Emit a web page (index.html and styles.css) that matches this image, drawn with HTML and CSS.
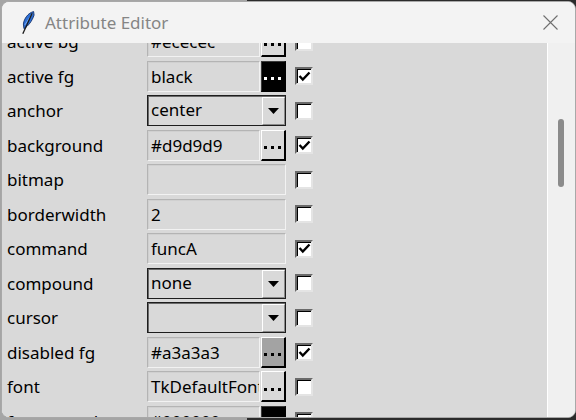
FILE: index.html
```html
<!DOCTYPE html>
<html>
<head>
<meta charset="utf-8">
<link rel="stylesheet" href="styles.css">
</head>
<body>
<div class="window">
  <div class="titlebar">
    <svg class="feather" width="15" height="26" viewBox="0 0 16 26">
      <path d="M14.5 0.8 C8.5 2.5 4.5 8 3.6 14 L4.2 19 C8.5 16.5 13 11 15 4.5 Z" fill="#2d6fd6" stroke="#16346e" stroke-width="1"/>
      <path d="M13.5 3 C10.5 7 7.5 11 5.2 15" stroke="#8db8f2" stroke-width="0.9" fill="none"/>
      <path d="M13 2.5 L3 24.5" stroke="#1a1a1a" stroke-width="1.4"/>
    </svg>
    <span class="title">Attribute Editor</span>
    <svg class="close" width="15" height="15" viewBox="0 0 15 15">
      <path d="M0.5 0.5 L14.5 14.5 M14.5 0.5 L0.5 14.5" stroke="#6f6f6f" stroke-width="1.1"/>
    </svg>
  </div>
  <div class="content">
    <div class="viewport">
      <div class="list">
        <div class="row">
          <span class="label">active bg</span>
          <div class="field"><span class="entry">#ececec</span><span class="btn btn-light"><svg width="18" height="4" viewBox="0 0 18 4"><rect x="0" y="0" width="3" height="3"/><rect x="7" y="0" width="3" height="3"/><rect x="14" y="0" width="3" height="3"/></svg></span></div>
          <span class="check"></span>
        </div>
        <div class="row">
          <span class="label">active fg</span>
          <div class="field"><span class="entry">black</span><span class="btn btn-black"><svg width="18" height="4" viewBox="0 0 18 4"><rect x="0" y="0" width="3" height="3"/><rect x="7" y="0" width="3" height="3"/><rect x="14" y="0" width="3" height="3"/></svg></span></div>
          <span class="check checked"><svg width="13" height="13" viewBox="0 0 13 13"><path d="M1.5 6 L4.8 9.5 L11.5 2.5" fill="none" stroke="#000" stroke-width="2.4"/></svg></span>
        </div>
        <div class="row">
          <span class="label">anchor</span>
          <div class="field combo"><span class="combo-text">center</span><span class="arrow"><svg width="11" height="6" viewBox="0 0 11 6"><path d="M0 0 H11 L5.5 6 Z"/></svg></span></div>
          <span class="check"></span>
        </div>
        <div class="row">
          <span class="label">background</span>
          <div class="field"><span class="entry">#d9d9d9</span><span class="btn btn-light"><svg width="18" height="4" viewBox="0 0 18 4"><rect x="0" y="0" width="3" height="3"/><rect x="7" y="0" width="3" height="3"/><rect x="14" y="0" width="3" height="3"/></svg></span></div>
          <span class="check checked"><svg width="13" height="13" viewBox="0 0 13 13"><path d="M1.5 6 L4.8 9.5 L11.5 2.5" fill="none" stroke="#000" stroke-width="2.4"/></svg></span>
        </div>
        <div class="row">
          <span class="label">bitmap</span>
          <div class="field"><span class="entry"></span></div>
          <span class="check"></span>
        </div>
        <div class="row">
          <span class="label">borderwidth</span>
          <div class="field"><span class="entry">2</span></div>
          <span class="check"></span>
        </div>
        <div class="row">
          <span class="label">command</span>
          <div class="field"><span class="entry">funcA</span></div>
          <span class="check checked"><svg width="13" height="13" viewBox="0 0 13 13"><path d="M1.5 6 L4.8 9.5 L11.5 2.5" fill="none" stroke="#000" stroke-width="2.4"/></svg></span>
        </div>
        <div class="row">
          <span class="label">compound</span>
          <div class="field combo"><span class="combo-text">none</span><span class="arrow"><svg width="11" height="6" viewBox="0 0 11 6"><path d="M0 0 H11 L5.5 6 Z"/></svg></span></div>
          <span class="check"></span>
        </div>
        <div class="row">
          <span class="label">cursor</span>
          <div class="field combo"><span class="combo-text"></span><span class="arrow"><svg width="11" height="6" viewBox="0 0 11 6"><path d="M0 0 H11 L5.5 6 Z"/></svg></span></div>
          <span class="check"></span>
        </div>
        <div class="row">
          <span class="label">disabled fg</span>
          <div class="field"><span class="entry">#a3a3a3</span><span class="btn btn-grey"><svg width="18" height="4" viewBox="0 0 18 4"><rect x="0" y="0" width="3" height="3"/><rect x="7" y="0" width="3" height="3"/><rect x="14" y="0" width="3" height="3"/></svg></span></div>
          <span class="check checked"><svg width="13" height="13" viewBox="0 0 13 13"><path d="M1.5 6 L4.8 9.5 L11.5 2.5" fill="none" stroke="#000" stroke-width="2.4"/></svg></span>
        </div>
        <div class="row">
          <span class="label">font</span>
          <div class="field"><span class="entry">TkDefaultFont</span><span class="btn btn-light"><svg width="18" height="4" viewBox="0 0 18 4"><rect x="0" y="0" width="3" height="3"/><rect x="7" y="0" width="3" height="3"/><rect x="14" y="0" width="3" height="3"/></svg></span></div>
          <span class="check"></span>
        </div>
        <div class="row">
          <span class="label">foreground</span>
          <div class="field"><span class="entry">#000000</span><span class="btn btn-black"><svg width="18" height="4" viewBox="0 0 18 4"><rect x="0" y="0" width="3" height="3"/><rect x="7" y="0" width="3" height="3"/><rect x="14" y="0" width="3" height="3"/></svg></span></div>
          <span class="check checked"><svg width="13" height="13" viewBox="0 0 13 13"><path d="M1.5 6 L4.8 9.5 L11.5 2.5" fill="none" stroke="#000" stroke-width="2.4"/></svg></span>
        </div>
      </div>
    </div>
    <div class="scrollbar"><div class="thumb"></div></div>
  </div>
</div>
</body>
</html>
```

FILE: styles.css
```css
html, body {
  margin: 0;
  height: 100%;
}
body {
  background: linear-gradient(to right, #a5a5a5 0 247px, #2b2b2b 247px);
  font-family: "Noto Sans", "DejaVu Sans", sans-serif;
  overflow: hidden;
}
.window {
  box-sizing: border-box;
  margin: 1px 0 0 1px;
  width: 575px;
  height: 417px;
  border: 1px solid #a8a8a8;
  border-radius: 8px;
  overflow: hidden;
  display: flex;
  flex-direction: column;
  background: #f3f3f3;
}
.titlebar {
  height: 41px;
  flex: none;
  display: flex;
  align-items: center;
  padding-left: 18px;
  background: #f3f3f3;
}
.feather {
  flex: none;
  margin-top: 1px;
}
.title {
  margin-left: 10px;
  font-size: 17px;
  color: #858585;
  flex: 1;
  white-space: nowrap;
}
.close {
  margin-right: 17px;
}
.content {
  flex: 1;
  display: flex;
  min-height: 0;
}
.viewport {
  flex: 1;
  background: #d9d9d9;
  overflow: hidden;
}
.list {
  margin-top: -18.75px;
}
.row {
  display: flex;
  align-items: center;
  height: 34.5px;
  font-size: 17px;
  color: #000;
}
.label {
  box-sizing: border-box;
  width: 145px;
  padding-left: 5px;
  white-space: nowrap;
}
.field {
  box-sizing: border-box;
  width: 139px;
  height: 31px;
  display: flex;
  gap: 1px;
}
.entry {
  box-sizing: border-box;
  flex: 1;
  min-width: 0;
  overflow: hidden;
  white-space: nowrap;
  padding-left: 3px;
  line-height: 29px;
  border: 1px solid #f2f2f2;
  border-top-color: #b4b4b4;
  border-left-color: #b4b4b4;
  box-shadow: inset 1px 1px 0 #d0d0d0;
  background: #d9d9d9;
}
.btn {
  box-sizing: border-box;
  width: 25px;
  flex: none;
  display: flex;
  align-items: center;
  justify-content: center;
  padding-top: 7px;
  border-top: 1px solid #fff;
  border-left: 1px solid #fff;
  border-right: 2px solid #000;
  border-bottom: 2px solid #000;
}
.btn svg {
  fill: #000;
}
.btn-light {
  background: #d9d9d9;
}
.btn-grey {
  background: #a3a3a3;
}
.btn-black {
  background: #000;
  border-top-color: #3a3a3a;
  border-left-color: #3a3a3a;
}
.btn-black svg {
  fill: #fff;
}
.combo {
  border: 1px solid #1e1e1e;
  box-shadow: inset 1px 1px 0 #6a6a6a;
  background: #d9d9d9;
  gap: 0;
}
.combo-text {
  flex: 1;
  padding-left: 3px;
  line-height: 28px;
}
.arrow {
  box-sizing: border-box;
  width: 23px;
  display: flex;
  align-items: center;
  justify-content: center;
  border-left: 1px solid #fff;
  border-top: 1px solid #fff;
  border-right: 1px solid #8a8a8a;
  border-bottom: 1px solid #8a8a8a;
  margin: 1px 0 0 0;
}
.arrow svg {
  fill: #000;
}
.check {
  box-sizing: border-box;
  width: 18px;
  height: 18px;
  margin-left: 9px;
  background: #fff;
  border: 2px solid #e4e4e4;
  border-top-color: #6a6a6a;
  border-left-color: #6a6a6a;
  box-shadow: inset 1px 1px 0 #000;
  display: flex;
  align-items: center;
  justify-content: center;
}
.scrollbar {
  width: 27px;
  flex: none;
  border-left: 1px solid #fff;
  background: #f0f0f0;
}
.thumb {
  width: 6px;
  height: 68px;
  margin: 76px 0 0 10px;
  border-radius: 3px;
  background: #8b8b8b;
}
```
